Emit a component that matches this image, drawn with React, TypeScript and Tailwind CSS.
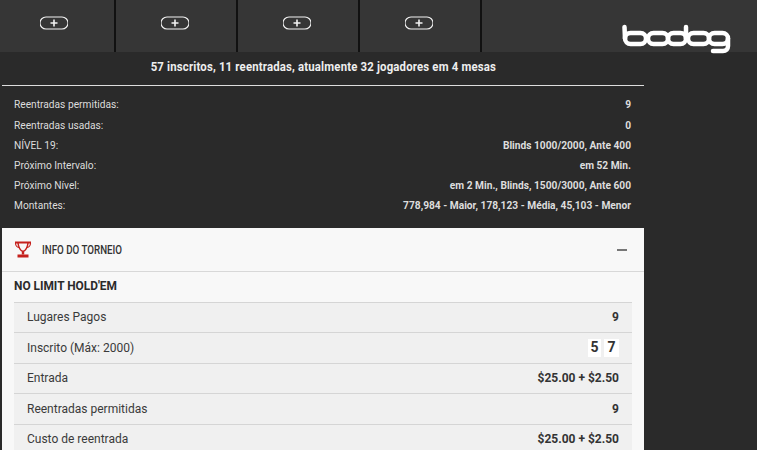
const infoRows: [string, string][] = [
  ["Reentradas permitidas:", "9"],
  ["Reentradas usadas:", "0"],
  ["NÍVEL 19:", "Blinds 1000/2000, Ante 400"],
  ["Próximo Intervalo:", "em 52 Min."],
  ["Próximo Nível:", "em 2 Min., Blinds, 1500/3000, Ante 600"],
  ["Montantes:", "778,984 - Maior, 178,123 - Média, 45,103 - Menor"],
];

function PlusPill() {
  return (
    <svg width="28" height="14" viewBox="0 0 28 14" fill="none" stroke="#f2f2f2">
      <path d="M6 1h16a6 6 0 0 1 0 12H6A6 6 0 0 1 6 1Z" strokeWidth="1.1" />
      <path d="M14 3.500v7M10.500 7h7" strokeWidth="1.600" />
    </svg>
  );
}

function Logo() {
  return (
    <svg width="110" height="30" viewBox="0 0 110 30" fill="none" stroke="#fff" strokeWidth="4.5" strokeLinecap="round">
      <rect x="3" y="9" width="21" height="11" rx="5.500" />
      <path d="M3 14.500 2.500 3" />
      <rect x="26" y="9" width="20" height="11" rx="5.500" />
      <rect x="46" y="9" width="18" height="11" rx="5.500" />
      <path d="M64 14.500V3" />
      <rect x="66" y="9" width="21" height="11" rx="5.500" />
      <rect x="87" y="9" width="19" height="11" rx="5.500" />
      <path d="M106 14.500V22c0 3-2 5-5 5H91" />
    </svg>
  );
}

function Trophy() {
  return (
    <svg width="18" height="17" viewBox="0 0 18 17" fill="none" stroke="#c5211d">
      <path d="M1 1.500h16" strokeWidth="2" />
      <path d="M1.500 2c0 3 2 4.500 4 4.500M16.500 2c0 3-2 4.500-4 4.500" strokeWidth="1.200" />
      <path d="M4 2c.5 4 2 7.500 5 8.500 3-1 4.500-4.500 5-8.500" strokeWidth="1.500" />
      <path d="M9 10.500v3" strokeWidth="2.400" />
      <path d="M3.500 15h11" strokeWidth="3" />
    </svg>
  );
}

function Row({ label, children }: { label: string; children: React.ReactNode }) {
  return (
    <div className="flex h-[30.5px] items-center justify-between border-t border-[#d5d5d5] bg-[#f0f0f0] pl-[13px] pr-[13px] text-[12px] text-[#3a3a3a]">
      <span>{label}</span>
      <span className="font-bold text-[#333]">{children}</span>
    </div>
  );
}

export default function App() {
  return (
    <div className="relative h-[450px] w-[757px] overflow-hidden bg-[#2a2a2a] font-['Roboto',sans-serif]">
      <div className="flex h-[52px] bg-[#363636]">
        {[0, 1, 2, 3].map((i) => (
          <div key={i} className={`flex ${i === 0 ? "w-[116px] pr-[7px]" : "w-[122px] pr-[2px]"} items-center justify-center border-r-2 border-[#111] pb-[6px]`}>
            <PlusPill />
          </div>
        ))}
      </div>
      <div className="absolute left-[622px] top-[24px]">
        <Logo />
      </div>
      <div className="w-[644px]">
        <div className="ml-[2px] flex h-[34px] items-center justify-center border-b border-[#ddd] pb-[4px] text-[#eee]">
          <span className="scale-x-[0.875] whitespace-nowrap text-[13px] font-bold tracking-[0.2px]">
            57 inscritos, 11 reentradas, atualmente 32 jogadores em 4 mesas
          </span>
        </div>
        <div className="flex h-[142px] flex-col pl-[14px] pr-[13px] pt-[9px] text-[10.2px]">
          {infoRows.map(([a, b]) => (
            <div key={a} className="flex h-[20.2px] items-center justify-between">
              <span className="text-[#ddd]">{a}</span>
              <span className="font-bold text-[#ddd]">{b}</span>
            </div>
          ))}
        </div>
        <div className="ml-[2px] bg-[#f8f8f8]">
          <div className="flex h-[44px] items-center border-b border-[#d8d8d8] pl-[12px] pr-[17px]">
            <Trophy />
            <span className="ml-[10px] origin-left scale-x-[0.75] whitespace-nowrap text-[13px] font-medium text-[#333]">INFO DO TORNEIO</span>
            <span className="ml-auto h-[2px] w-[10px] bg-[#777]" />
          </div>
          <div className="px-[12px]">
            <div className="flex h-[29.500px] items-center pt-[1px] text-[11.900px] font-bold text-[#2b2b2b]">NO LIMIT HOLD'EM</div>
            <Row label="Lugares Pagos">9</Row>
            <Row label="Inscrito (Máx: 2000)">
              <span className="flex gap-[3px] text-[14px]">
                <span className="flex h-[18px] w-[13px] items-center justify-center bg-white">5</span>
                <span className="flex h-[18px] w-[15px] items-center justify-center bg-white">7</span>
              </span>
            </Row>
            <Row label="Entrada">$25.00 + $2.50</Row>
            <Row label="Reentradas permitidas">9</Row>
            <Row label="Custo de reentrada">$25.00 + $2.50</Row>
          </div>
        </div>
      </div>
    </div>
  );
}
